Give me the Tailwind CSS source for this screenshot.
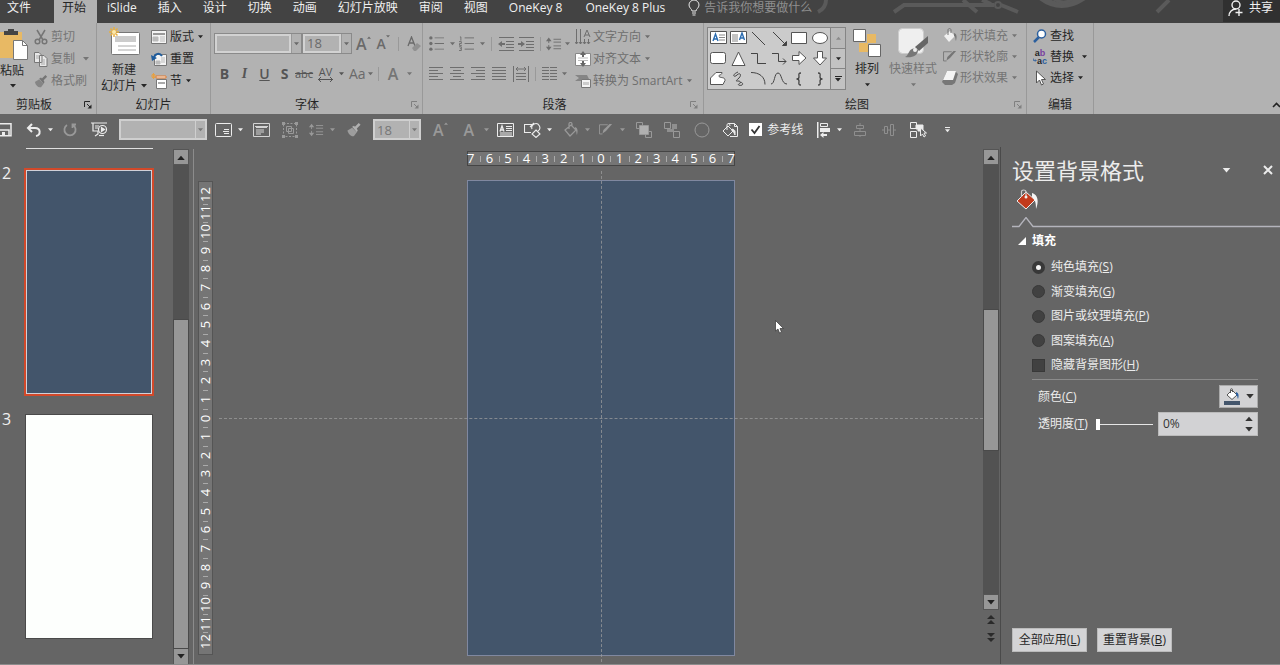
<!DOCTYPE html>
<html lang="zh-CN">
<head>
  <meta charset="UTF-8" />
  <meta name="viewport" content="width=device-width, initial-scale=1.0"/>
  <title>设置背景格式</title>
  <script src="https://cdn.jsdelivr.net/npm/@tailwindcss/browser@4"></script>
</head>
<body class="h-screen flex flex-col overflow-hidden bg-[#656565] text-[12px] leading-4 text-[#262626] whitespace-nowrap font-['Open_Sans','Noto_Sans_CJK_SC',sans-serif]">

  <!-- shared glyphs -->
  <svg class="hidden">
    <symbol id="caret" viewBox="0 0 6 4"><path d="M0 0h6L3 3.5z" fill="currentColor"/></symbol>
    <symbol id="caret-up" viewBox="0 0 6 4"><path d="M0 4h6L3 .5z" fill="currentColor"/></symbol>
    <symbol id="launcher" viewBox="0 0 8 8"><path d="M.5 6V.5H6M3 3l3.500 3.500" fill="none" stroke="currentColor"/><path d="M7.500 3.500v4h-4z" fill="currentColor"/></symbol>
    <symbol id="brush" viewBox="0 0 16 16"><path d="M1 9l5-3 5 5-3 4c-3 1-6-2-7-6z" fill="currentColor" opacity=".75"/><path d="M6 5l2-1 1 1 4-4 2 2-4 4 1 2-1 2z" fill="currentColor"/></symbol>
    <symbol id="bucket" viewBox="0 0 16 16"><path d="M2 8l6-5 5 5-6 6z" fill="currentColor"/><path d="M6 7V2c0-2 3-2 3 0v3" fill="none" stroke="#777"/><path d="M12 5c3 1 3 4 2 8-1-2 0-4-2-5z" fill="#777"/></symbol>
    <symbol id="bucket-line" viewBox="0 0 16 16"><path d="M2 8l6-5 5 5-6 6zM6 7V2c0-2 3-2 3 0v3" fill="none" stroke="currentColor" stroke-width="1.200"/><path d="M12 5c3 1 3 4 2 8-1-2 0-4-2-5z" fill="currentColor"/></symbol>
    <symbol id="outline-pen" viewBox="0 0 16 16"><path d="M10 2H.6v10.500H4" fill="none" stroke="currentColor"/><path d="M15 1L8 9l-4 3 1-4 7-7z" fill="currentColor"/></symbol>
    <symbol id="line-space" viewBox="0 0 18 16"><path d="M4 3v4M4 9v4M9 3h8M9 6h8M9 10h8M9 13h8" stroke="currentColor" fill="none"/><path d="M1 5l3-4 3 4zM1 11l3 4 3-4z" fill="currentColor"/></symbol>
  </svg>

  <!-- tabs -->
  <nav class="relative h-[23px] shrink-0 flex bg-[#434343] text-[#f0f0f0]">
    <svg class="absolute left-[760px] top-0 w-[440px] h-[23px]" viewBox="0 0 440 23" fill="none" stroke="#5a5a5a" stroke-width="4">
      <path d="M66 0q0 8-8 12M134 12l10-7h90M203 0l14 12M241 5l17 7M222 0l9 4M397 12l12-12"/>
      <circle cx="238" cy="5" r="3" stroke-width="2"/>
      <path d="M279-4q22 18 47 0" stroke-width="6"/>
      <path d="M292-2q12 8 22 0" stroke-width="3"/>
    </svg>
    <div class="relative flex items-start">
      <a href="#" class="h-[23px] pl-[7px] w-[54px]">文件</a>
      <a href="#" class="h-[23px] w-[43px] pl-[8px] bg-[#b2b2b2] text-[#262626]">开始</a>
      <div class="flex gap-[21px] pl-[10px]">
        <a href="#">iSlide</a>
        <a href="#">插入</a>
        <a href="#">设计</a>
        <a href="#">切换</a>
        <a href="#">动画</a>
        <a href="#">幻灯片放映</a>
        <a href="#">审阅</a>
        <a href="#">视图</a>
        <a href="#" class="pr-[2px]">OneKey 8</a>
        <a href="#" class="pr-[2px]">OneKey 8 Plus</a>
        <label class="flex gap-1 text-[#8f8f8f]">
          <svg class="w-[12px] h-[16px]" viewBox="0 0 12 16" fill="none" stroke="#e6e6e6"><path d="M4 11c0-2-3-3-3-6a5 5 0 0 1 10 0c0 3-3 4-3 6zM4 13h4M4.500 15h3"/></svg>
          <input aria-label="告诉我" placeholder="告诉我你想要做什么" class="w-[130px] h-4 bg-transparent placeholder:text-[#8f8f8f] outline-none"/>
        </label>
      </div>
    </div>
    <button class="relative ml-auto w-[57px] h-[22px] pl-1 flex gap-1 bg-[#303030] items-start">
      <svg class="w-[18px] h-[17px]" viewBox="0 0 18 17" fill="none" stroke="#f0f0f0" stroke-width="1.400"><circle cx="9" cy="5" r="4"/><path d="M2 16c0-4 3-7 7-7M12 9v7M8.500 12.500h7"/></svg>
      共享
    </button>
  </nav>

  <!-- ribbon -->
  <header class="h-[91px] shrink-0 flex bg-[#b2b2b2]">
    <section class="w-[97px] flex flex-col border-r border-[#999]">
      <div class="flex h-[69px] pt-[3px]">
        <button class="w-[32px] flex flex-col items-start">
          <svg class="w-[28px] h-[34px]" viewBox="0 0 28 34"><path d="M0 6h22v26H0z" fill="#e8b964"/><path d="M4 9V5h4V3h6v2h4v4z" fill="#444"/><path d="M13.500 14.500h9l5 5v14h-14z" fill="#fff" stroke="#777"/><path d="M22.500 14.500v5h5" fill="none" stroke="#777"/></svg>
          <span class="pt-[3px]">粘贴</span>
          <svg class="w-[6px] h-[4px] ml-[10px] mt-[5px]"><use href="#caret"/></svg>
        </button>
        <div class="pl-[2px] text-[#757575]">
          <button class="h-[22px] flex items-center gap-[3px]">
            <svg class="w-[14px] h-[16px]" viewBox="0 0 14 16" fill="none" stroke="currentColor" stroke-width="1.500"><path d="M3 1l6 10M11 1L5 11"/><circle cx="3.500" cy="12.500" r="2.300"/><circle cx="10.500" cy="12.500" r="2.300"/></svg>剪切</button>
          <button class="h-[22px] flex items-center gap-[3px]">
            <svg class="w-[14px] h-[16px]" viewBox="0 0 14 16" fill="#e8e8e8" stroke="#777"><path d="M.5 1.500H5l3 3v7H.5zM5.500 4.500H10l3 3v8H5.500z"/><path d="M2 5h3M2 7h3M7 9h4M7 11h4M7 13h4" stroke="#aaa"/></svg>复制
            <svg class="w-[6px] h-[4px] ml-[5px]"><use href="#caret"/></svg></button>
          <button class="h-[22px] flex items-center gap-[3px]">
            <svg class="w-[14px] h-[14px]"><use href="#brush"/></svg>格式刷</button>
        </div>
      </div>
      <div class="h-[22px] flex items-center pt-[3px] pl-4 pr-1">剪贴板<button aria-label="剪贴板选项" class="ml-auto"><svg class="w-[8px] h-[8px]"><use href="#launcher"/></svg></button></div>
    </section>

    <section class="w-[114px] flex flex-col border-r border-[#999]">
      <div class="flex h-[69px] pt-[3px]">
        <button class="w-[54px] flex flex-col items-center">
          <svg class="w-[32px] h-[30px] shrink-0" viewBox="0 0 32 30"><rect x="3.500" y="6.500" width="28" height="22" rx="1" fill="#fff" stroke="#777"/><path d="M7 10h21v6H7z" fill="#ccc"/><path d="M10 20h18M10 24h18" stroke="#aaa"/><path d="M6 1v10M1 6h10M2.500 2.500l7 7M9.500 2.500l-7 7" stroke="#e8b040" stroke-width="1.500"/><circle cx="6" cy="6" r="2" fill="#f8e8b0"/></svg>
          <span class="pt-[6px]">新建</span>
          <span class="flex items-center gap-1">幻灯片<svg class="w-[6px] h-[4px]"><use href="#caret"/></svg></span>
        </button>
        <div>
          <button class="h-[22px] flex items-center gap-[3px]">
            <svg class="w-[16px] h-[14px]" viewBox="0 0 16 14"><path d="M.5.5h15v13H.5z" fill="#f4f4f4" stroke="#777"/><path d="M2 3h12v2H2z" fill="#999"/><path d="M9 7h5M9 9h5M9 11h5M2 7h5v4H2z" fill="#bbb" stroke="#bbb"/></svg>版式
            <svg class="w-[5px] h-[4px] ml-[1px]"><use href="#caret"/></svg></button>
          <button class="h-[22px] flex items-center gap-[3px]">
            <svg class="w-[16px] h-[14px]" viewBox="0 0 16 14"><path d="M3.500 2.500h12v11h-12z" fill="#f4f4f4" stroke="#777"/><path d="M10 6h4M10 8h4M10 10h4M5 9h4v3H5z" fill="#bbb" stroke="#bbb"/><path d="M3 7c0-5 5-7 8-3" fill="none" stroke="#1f5c9c" stroke-width="2"/><path d="M0 3l1 6 5-3z" fill="#1f5c9c"/></svg>重置</button>
          <button class="h-[22px] flex items-center gap-[3px]">
            <svg class="w-[16px] h-[16px]" viewBox="0 0 16 16"><path d="M5 3h10v2H5z" fill="#f4f4f4" stroke="#e07a30"/><path d="M5.500 6.500h10v9h-10z" fill="#fff" stroke="#777"/><path d="M7 9h7v2H7z" fill="#aaa"/><path d="M2.500 0v6M0 3h5M1 1l3 4M4 1L1 5" stroke="#e8a040"/></svg>节
            <svg class="w-[5px] h-[4px] ml-[1px]"><use href="#caret"/></svg></button>
        </div>
      </div>
      <div class="h-[22px] pt-[3px] flex items-center justify-center">幻灯片</div>
    </section>

    <section class="w-[212px] flex flex-col border-r border-[#999] text-[#6a6a6a]">
      <div class="h-[69px] pl-[3px]">
        <div class="h-[41px] flex items-center">
          <label class="flex items-center w-[88px] h-[21px] border border-[#8a8a8a]">
            <select aria-label="字体" class="appearance-none flex-1 w-0 h-full border-2 border-[#d2d2d2] bg-[#b2b2b2]"><option></option></select>
            <span class="w-[10px] h-full flex items-center justify-center border-l border-[#999]"><svg class="w-[5px] h-[4px]"><use href="#caret"/></svg></span>
          </label>
          <label class="flex items-center w-[50px] h-[21px] border border-[#8a8a8a]">
            <select aria-label="字号" class="appearance-none flex-1 w-0 h-full pl-[2px] border-2 border-[#d2d2d2] bg-[#b2b2b2] leading-[15px] text-[13px]"><option>18</option></select>
            <span class="w-[10px] h-full flex items-center justify-center border-l border-[#999]"><svg class="w-[5px] h-[4px]"><use href="#caret"/></svg></span>
          </label>
          <button aria-label="增大字号" class="ml-1 flex items-start text-[16px] font-semibold leading-5">A<svg class="w-[4px] h-[3px] mt-[2px]"><use href="#caret-up"/></svg></button>
          <button aria-label="减小字号" class="ml-[6px] flex items-start text-[14px] font-semibold leading-5">A<svg class="w-[4px] h-[3px] mt-[1px]"><use href="#caret"/></svg></button>
          <span class="ml-2 w-px h-[14px] bg-[#999]"></span>
          <button aria-label="清除格式" class="ml-2"><svg class="w-[14px] h-[16px]" viewBox="0 0 14 16"><path d="M1 10L4.500 1 8 10M2 7h5" fill="none" stroke="currentColor" stroke-width="1.300"/><path d="M5 12l5-5 4 3-5 5H7z" fill="#919191"/></svg></button>
        </div>
        <div class="h-[20px] flex items-center gap-[9px] pl-[5px] text-[14px] text-[#555]">
          <button class="font-bold w-[11px]">B</button>
          <button class="font-bold italic w-[11px] font-['Liberation_Serif',serif]">I</button>
          <button class="font-semibold underline w-[11px]">U</button>
          <button class="font-bold w-[11px]">S</button>
          <button class="line-through text-[11px] w-[18px] -mx-1">abc</button>
          <button class="flex items-center gap-[6px] text-[11px]"><span class="flex flex-col items-center leading-[11px]">AV<svg class="w-[15px] h-[5px]" viewBox="0 0 15 5" fill="none" stroke="currentColor"><path d="M0 2.500h15M3 0L.5 2.500 3 5M12 0l2.500 2.500L12 5"/></svg></span><svg class="w-[5px] h-[4px]"><use href="#caret"/></svg></button>
          <button class="flex items-center gap-[2px] text-[#6a6a6a] -ml-1">Aa<svg class="w-[5px] h-[4px]"><use href="#caret"/></svg></button>
          <span class="w-px h-[14px] bg-[#999] -ml-1"></span>
          <button class="flex items-center gap-[9px] font-semibold text-[16px] text-[#757575]">A<svg class="w-[5px] h-[4px]"><use href="#caret"/></svg></button>
        </div>
      </div>
      <div class="h-[22px] flex items-center pt-[3px] pr-[3px] text-[#262626]"><span class="flex-1 text-center pr-2">字体</span><button aria-label="字体选项" class="text-[#808080]"><svg class="w-[8px] h-[8px]"><use href="#launcher"/></svg></button></div>
    </section>

    <section class="w-[281px] flex flex-col border-r border-[#999] text-[#6e6e6e]">
      <div class="h-[69px] flex">
        <div class="w-[152px] pl-[6px]">
          <div class="h-[41px] flex items-center">
            <button aria-label="项目符号" class="flex items-center gap-[6px]"><svg class="w-[15px] h-[15px]" viewBox="0 0 16 16" fill="currentColor"><circle cx="2" cy="2" r="1.800"/><circle cx="2" cy="8" r="1.800"/><circle cx="2" cy="14" r="1.800"/><path d="M6 1.500h10v1H6zM6 7.500h10v1H6zM6 13.500h10v1H6z"/></svg><svg class="w-[5px] h-[4px]"><use href="#caret"/></svg></button>
            <button aria-label="编号" class="ml-1 flex items-center gap-[6px]"><svg class="w-[15px] h-[15px]" viewBox="0 0 16 16" fill="none" stroke="currentColor"><path d="M1 1h1v4M0 6h2.500v2H.5v2h2.500M0 11.500h2.500v4H0M1 13.500h1M6 2h10M6 8h10M6 14h10"/></svg><svg class="w-[5px] h-[4px]"><use href="#caret"/></svg></button>
            <span class="ml-[6px] w-px h-[14px] bg-[#999]"></span>
            <button aria-label="减少缩进" class="ml-[6px]"><svg class="w-[16px] h-[14px]" viewBox="0 0 16 14" fill="none" stroke="currentColor"><path d="M1 .5h15M8 4.500h8M8 7.500h8M8 10.500h8M1 13.500h15"/><path d="M0 7l4-3v2h3v2H4v2z" fill="currentColor" stroke="none"/></svg></button>
            <button aria-label="增加缩进" class="ml-[4px]"><svg class="w-[16px] h-[14px]" viewBox="0 0 16 14" fill="none" stroke="currentColor"><path d="M1 .5h15M8 4.500h8M8 7.500h8M8 10.500h8M1 13.500h15"/><path d="M7 7L3 4v2H0v2h3v2z" fill="currentColor" stroke="none"/></svg></button>
            <span class="ml-[6px] w-px h-[14px] bg-[#999]"></span>
            <button aria-label="行距" class="ml-[4px] flex items-center gap-[3px]"><svg class="w-[17px] h-[16px]"><use href="#line-space"/></svg><svg class="w-[5px] h-[4px]"><use href="#caret"/></svg></button>
          </div>
          <div class="h-[20px] flex items-center gap-[7px]">
            <button aria-label="左对齐"><svg class="w-[14px] h-[15px]" viewBox="0 0 14 15" stroke="currentColor"><path d="M0 .5h14M0 3.500h9M0 6.500h14M0 9.500h9M0 12.500h14"/></svg></button>
            <button aria-label="居中"><svg class="w-[14px] h-[15px]" viewBox="0 0 14 15" stroke="currentColor"><path d="M0 .5h14M3 3.500h8M0 6.500h14M3 9.500h8M0 12.500h14"/></svg></button>
            <button aria-label="右对齐"><svg class="w-[14px] h-[15px]" viewBox="0 0 14 15" stroke="currentColor"><path d="M0 .5h14M5 3.500h9M0 6.500h14M5 9.500h9M0 12.500h14"/></svg></button>
            <button aria-label="两端对齐"><svg class="w-[14px] h-[15px]" viewBox="0 0 14 15" stroke="currentColor"><path d="M0 .5h14M0 3.500h14M0 6.500h14M0 9.500h14M0 12.500h14"/></svg></button>
            <button aria-label="分散对齐"><svg class="w-[16px] h-[16px]" viewBox="0 0 16 16" fill="none" stroke="currentColor"><path d="M.5 0v16M15.500 0v16M3 3h10M5 1L3 3l2 2M11 1l2 2-2 2M3 7.500h10M3 10.500h10M3 13.500h10"/></svg></button>
            <span class="w-px h-[14px] bg-[#999] -mx-px"></span>
            <button aria-label="分栏" class="flex items-center gap-[5px]"><svg class="w-[15px] h-[15px]" viewBox="0 0 15 15" stroke="currentColor"><path d="M0 .5h7M8 .5h7M0 3.500h7M8 3.500h7M0 6.500h7M8 6.500h7M0 9.500h7M8 9.500h7M0 12.500h7M8 12.500h7"/></svg><svg class="w-[5px] h-[4px]"><use href="#caret"/></svg></button>
          </div>
        </div>
        <div class="pt-[3px]">
          <button class="h-[22px] flex items-center gap-[2px]">
            <svg class="w-[16px] h-[16px]" viewBox="0 0 16 16" fill="none" stroke="currentColor"><path d="M1.500 0v15M5.500 0v15M9 8L12 1l3 7M10 6h4M9.500 10v5M13.500 10v5M0 13l1.500 2L3 13M4 13l1.500 2L7 13M8 13l1.500 2 1.500-2M12 13l1.500 2 1.500-2"/></svg>文字方向
            <svg class="w-[5px] h-[4px] ml-[2px]"><use href="#caret"/></svg></button>
          <button class="h-[22px] flex items-center gap-[2px]">
            <svg class="w-[16px] h-[16px]" viewBox="0 0 16 16"><path d="M.5 2.500h15v12H.5z" fill="#fff" stroke="#888"/><path d="M3 7h10M3 9.500h10" stroke="#bbb"/><path d="M5 4L8 0l3 4H9v2H7V4zM5 12L8 16l3-4H9v-2H7v2z" fill="#666"/></svg>对齐文本
            <svg class="w-[5px] h-[4px] ml-[2px]"><use href="#caret"/></svg></button>
          <button class="h-[22px] flex items-center gap-[2px]">
            <svg class="w-[16px] h-[14px]" viewBox="0 0 16 14"><path d="M0 1h12l2 4-4 2H0l4-3z" fill="#858585"/><path d="M6.500 5.500h9v8h-9z" fill="#f4f4f4" stroke="#777"/><path d="M8 8h6v3H8z" fill="#ccc"/></svg>转换为 SmartArt
            <svg class="w-[5px] h-[4px] ml-[3px]"><use href="#caret"/></svg></button>
        </div>
      </div>
      <div class="h-[22px] flex items-center pt-[3px] pr-[5px] text-[#262626]"><span class="flex-1 text-center pr-1">段落</span><button aria-label="段落选项" class="text-[#808080]"><svg class="w-[8px] h-[8px]"><use href="#launcher"/></svg></button></div>
    </section>

    <section class="w-[323px] flex flex-col border-r border-[#999]">
      <div class="h-[69px] flex pl-[3px] pt-[2px]">
        <div class="mt-[2px] w-[139px] h-[63px] flex border border-[#858585] bg-[#cbcbcb]">
          <div class="flex-1 grid grid-cols-6 grid-rows-3 place-items-center">
            <svg class="w-[17px] h-[14px]" viewBox="0 0 17 14"><path d="M.5.5h16v12H.5z" fill="#fff" stroke="#555"/><path d="M3 10l2.500-7L8 10M4 8h3" fill="none" stroke="#2b6cb0" stroke-width="1.400"/><path d="M9 4h6M9 6.500h6M9 9h6" stroke="#888"/></svg>
            <svg class="w-[17px] h-[14px]" viewBox="0 0 17 14"><path d="M.5.5h16v12H.5z" fill="#fff" stroke="#555"/><path d="M9.500 9L12 2l2.500 7M10.500 7h3" fill="none" stroke="#2b6cb0" stroke-width="1.400"/><path d="M3 3v8M5 3v8M7 3v8" stroke="#888"/></svg>
            <svg class="w-[15px] h-[15px]" viewBox="0 0 15 15" fill="none" stroke="#444"><path d="M1 1l13 13"/></svg>
            <svg class="w-[15px] h-[15px]" viewBox="0 0 15 15" fill="none" stroke="#444"><path d="M1 1l13 13"/><path d="M14.500 10.500v4h-4z" fill="#444"/></svg>
            <svg class="w-[16px] h-[12px]" viewBox="0 0 16 12"><path d="M.5.5h15v11H.5z" fill="#fff" stroke="#555"/></svg>
            <svg class="w-[16px] h-[12px]" viewBox="0 0 16 12"><ellipse cx="8" cy="6" rx="7.500" ry="5.500" fill="#fff" stroke="#555"/></svg>
            <svg class="w-[16px] h-[12px]" viewBox="0 0 16 12"><rect x=".5" y=".5" width="15" height="11" rx="2" fill="#fff" stroke="#555"/></svg>
            <svg class="w-[15px] h-[15px]" viewBox="0 0 15 15"><path d="M7.500 1L14 14.500H1z" fill="#fff" stroke="#555"/></svg>
            <svg class="w-[15px] h-[13px]" viewBox="0 0 15 13" fill="none" stroke="#444"><path d="M0 1.500h6.500v10H15"/></svg>
            <svg class="w-[15px] h-[13px]" viewBox="0 0 15 13" fill="none" stroke="#444"><path d="M0 1.500h6.500v8H14M11 6.500l3 3-3 3"/></svg>
            <svg class="w-[15px] h-[14px]" viewBox="0 0 15 14"><path d="M.5 4.500H7v-4L14 7l-7 6.500v-4H.5z" fill="#fff" stroke="#555"/></svg>
            <svg class="w-[14px] h-[15px]" viewBox="0 0 14 15"><path d="M4.500.5V7h-4L7 14l6.500-7h-4V.5z" fill="#fff" stroke="#555"/></svg>
            <svg class="w-[16px] h-[13px]" viewBox="0 0 16 13"><path d="M.5 12.500V6L6 .5h6c0 3-4 2-3 4 2 2 6 0 6 4l-2 4z" fill="#fff" stroke="#555"/></svg>
            <svg class="w-[13px] h-[15px]" viewBox="0 0 13 15" fill="none" stroke="#444"><path d="M6 1C-1 4 2 7 5 4s5 0 2 3-4 3-1 3 3 2 1 3 1 2 3 1-1-4-2-2"/></svg>
            <svg class="w-[15px] h-[13px]" viewBox="0 0 15 13" fill="none" stroke="#444"><path d="M0 .5c8 0 14 4 14 12"/></svg>
            <svg class="w-[16px] h-[13px]" viewBox="0 0 16 13" fill="none" stroke="#444"><path d="M0 12C4 12 3 1 7 1s3 11 9 11"/></svg>
            <svg class="w-[8px] h-[14px]" viewBox="0 0 8 14" fill="none" stroke="#444" stroke-width="1.300"><path d="M6 1C3 1 4 3 4 5S3 7 1.500 7C3 7 4 7 4 9s-1 4 2 4"/></svg>
            <svg class="w-[8px] h-[14px]" viewBox="0 0 8 14" fill="none" stroke="#444" stroke-width="1.300"><path d="M2 1c3 0 2 2 2 4s1 2 2.500 2C5 7 4 7 4 9s1 4-2 4"/></svg>
          </div>
          <div class="w-[15px] flex flex-col border-l border-[#858585] bg-[#c2c2c2]">
            <button aria-label="上一行" class="flex-1 flex items-center justify-center bg-[#b8b8b8] text-[#8a8a8a]"><svg class="w-[5px] h-[4px]"><use href="#caret-up"/></svg></button>
            <button aria-label="下一行" class="flex-1 flex items-center justify-center border-y border-[#858585]"><svg class="w-[5px] h-[4px]"><use href="#caret"/></svg></button>
            <button aria-label="其他" class="flex-1 flex flex-col gap-[1px] items-center justify-center"><span class="w-[7px] h-px bg-[#262626]"></span><svg class="w-[6px] h-[4px]"><use href="#caret"/></svg></button>
          </div>
        </div>
        <button class="ml-[6px] w-[30px] flex flex-col items-center">
          <svg class="w-[28px] h-[30px] mt-[3px] shrink-0" viewBox="0 0 28 30"><path d="M14 6h9v9h-9zM6 15h9v9H6z" fill="#e8b964"/><path d="M.5 1.500h12v12H.5zM15.500 16.500h12v12h-12z" fill="#fff" stroke="#666"/></svg>
          <span class="pt-[3px]">排列</span>
          <svg class="w-[5px] h-[4px] mt-[6px]"><use href="#caret"/></svg>
        </button>
        <button class="ml-[7px] w-[48px] flex flex-col items-center text-[#757575]">
          <svg class="w-[30px] h-[30px] mt-[3px] shrink-0" viewBox="0 0 30 30"><rect x=".5" y=".5" width="25" height="25" rx="4" fill="#efefef" stroke="#ccc"/><path d="M30 8v7l-9 8-4-4z" fill="#666"/><path d="M20 22c0 6-6 8-13 7 4-2 3-6 7-8 3-1 5 0 6 1z" fill="#777"/><circle cx="17" cy="22" r="2" fill="#eee"/></svg>
          <span class="pt-[3px]">快速样式</span>
          <svg class="w-[5px] h-[4px] mt-[6px]"><use href="#caret"/></svg>
        </button>
        <div class="ml-[5px] text-[#757575]">
          <button class="h-[21px] flex items-center gap-[2px]"><svg class="w-[16px] h-[16px] text-[#f0f0f0]"><use href="#bucket"/></svg>形状填充<svg class="w-[5px] h-[4px] ml-[2px]"><use href="#caret"/></svg></button>
          <button class="h-[21px] flex items-center gap-[2px]"><svg class="w-[16px] h-[14px]"><use href="#outline-pen"/></svg>形状轮廓<svg class="w-[5px] h-[4px] ml-[2px]"><use href="#caret"/></svg></button>
          <button class="h-[21px] flex items-center gap-[2px]"><svg class="w-[16px] h-[15px]" viewBox="0 0 16 15"><path d="M5 1h8l3 3-3 9-3 2H3l-3-3z" fill="#777"/><path d="M5 1h9l-3 9H1z" fill="#f4f4f4"/></svg>形状效果<svg class="w-[5px] h-[4px] ml-[2px]"><use href="#caret"/></svg></button>
        </div>
      </div>
      <div class="h-[22px] flex items-center pt-[3px] pr-[4px]"><span class="flex-1 text-center pr-1">绘图</span><button aria-label="绘图选项" class="text-[#808080]"><svg class="w-[8px] h-[8px]"><use href="#launcher"/></svg></button></div>
    </section>

    <section class="w-[67px] flex flex-col border-r border-[#999]">
      <div class="h-[69px] pl-[6px] pt-[2px]">
        <button class="h-[21px] flex items-center gap-[3px]"><svg class="w-[14px] h-[14px]" viewBox="0 0 14 14"><path d="M1 13l5-5" stroke="#2b5f9e" stroke-width="2.500"/><circle cx="8.500" cy="5" r="4" fill="#fff" stroke="#2b5f9e" stroke-width="1.500"/></svg>查找</button>
        <button class="h-[21px] flex items-center gap-[3px]">
          <span class="w-[14px] flex flex-col text-[9px] leading-[8px] font-bold font-['Liberation_Sans',sans-serif]"><span>a<span class="text-[#7a3fa0]">b</span></span><span class="flex items-center justify-end"><svg class="w-[5px] h-[5px]" viewBox="0 0 5 5" fill="none" stroke="#2b5f9e"><path d="M.5 0v2.500H4M2.500 1L4 2.500 2.500 4"/></svg>a<span class="text-[#2b5f9e]">c</span></span></span>替换
          <svg class="w-[5px] h-[4px] ml-[5px]"><use href="#caret"/></svg></button>
        <button class="h-[21px] flex items-center gap-[3px]"><svg class="w-[14px] h-[16px]" viewBox="0 0 14 16"><path d="M3.500 1v12l3-3 2 5 2-1-2-4.500h4z" fill="#fff" stroke="#555"/></svg>选择
          <svg class="w-[5px] h-[4px] ml-[1px]"><use href="#caret"/></svg></button>
      </div>
      <div class="h-[22px] pt-[3px] flex items-center justify-center">编辑</div>
    </section>
    <button aria-label="折叠功能区" class="ml-auto self-end mb-[6px] w-[8px]"><svg class="w-[8px] h-[6px]" viewBox="0 0 8 6" fill="none" stroke="#222" stroke-width="1.600"><path d="M1 5l3.500-3.500L8 5"/></svg></button>
  </header>

  <!-- quick access -->
  <div class="h-[33px] pb-[2px] shrink-0 flex items-center text-[#ececec]">
    <button aria-label="保存"><svg class="w-[12px] h-[14px]" viewBox="0 0 12 14"><path d="M0 .7h11v12H0M0 7h9v5" fill="none" stroke="currentColor" stroke-width="1.500"/><path d="M2 9h3v4H2z" fill="currentColor"/></svg></button>
    <button aria-label="撤消" class="ml-[14px] flex items-center gap-[6px]"><svg class="w-[16px] h-[14px]" viewBox="0 0 16 14" fill="none" stroke="currentColor" stroke-width="2"><path d="M6 1L2 5l4 4M2 5h7c6 0 6 7 1 8"/></svg><svg class="w-[5px] h-[4px]"><use href="#caret"/></svg></button>
    <button aria-label="恢复" class="ml-[10px] text-[#999]"><svg class="w-[14px] h-[14px]" viewBox="0 0 14 14" fill="none" stroke="currentColor" stroke-width="1.800"><path d="M4 2a5.600 5.600 0 1 0 6 0M13 1.500H9.500V5"/></svg></button>
    <button aria-label="从头放映" class="ml-[14px]"><svg class="w-[17px] h-[15px]" viewBox="0 0 17 15" fill="none" stroke="currentColor" stroke-width="1.200"><path d="M0 1h16M2 1v8h5M4 4h4M4 6h3M7 9v3l-3 2"/><circle cx="11.500" cy="7.500" r="4"/><path d="M10.500 5.500v4l3-2z" fill="currentColor"/><path d="M8 13.500h5"/></svg></button>
    <label class="ml-[11px] flex w-[88px] h-[21px] border-2 border-[#cfcfcf] bg-[#b2b2b2] text-[#777]">
      <select aria-label="字体" class="appearance-none flex-1 w-0"><option></option></select>
      <span class="w-[10px] h-full flex items-center justify-center border-l border-[#cfcfcf]"><svg class="w-[5px] h-[4px]"><use href="#caret"/></svg></span>
    </label>
    <button aria-label="文本框" class="ml-[8px] flex items-center gap-[6px]"><svg class="w-[17px] h-[14px]" viewBox="0 0 17 14" fill="none" stroke="currentColor"><rect x=".5" y=".5" width="16" height="13" rx="1"/><path d="M9 6.500h5M8 8.500h6M9 10.500h5"/></svg><svg class="w-[5px] h-[4px]"><use href="#caret"/></svg></button>
    <button aria-label="版式" class="ml-[10px]"><svg class="w-[17px] h-[14px]" viewBox="0 0 17 14" fill="none" stroke="#d4d4d4"><path d="M.5.5h16v13H.5zM2 3.500h13M3 7h8M3 9h8M3 11h5"/><path d="M3 4h11" stroke-width="2"/></svg></button>
    <button aria-label="组合" class="ml-[12px] text-[#999]"><svg class="w-[16px] h-[16px]" viewBox="0 0 16 16" fill="none" stroke="currentColor"><path d="M1.500 1.500h13v13h-13z" stroke-dasharray="2 1.500"/><path d="M4.500 4.500h5v5h-5zM6.500 6.500h5v5h-5z"/><path d="M0 0h3v3H0zM13 0h3v3h-3zM0 13h3v3H0zM13 13h3v3h-3z" fill="currentColor" stroke="none"/></svg></button>
    <button aria-label="行距" class="ml-[10px] flex items-center gap-[6px] text-[#999]"><svg class="w-[16px] h-[16px]"><use href="#line-space"/></svg><svg class="w-[5px] h-[4px]"><use href="#caret"/></svg></button>
    <button aria-label="格式刷" class="ml-[11px] text-[#b0b0b0]"><svg class="w-[16px] h-[15px]"><use href="#brush"/></svg></button>
    <label class="ml-[11px] flex w-[48px] h-[21px] border-2 border-[#cfcfcf] bg-[#b2b2b2] text-[#777]">
      <select aria-label="字号" class="appearance-none flex-1 w-0 pl-[2px] leading-4 text-[13px]"><option>18</option></select>
      <span class="w-[10px] h-full flex items-center justify-center border-l border-[#cfcfcf]"><svg class="w-[5px] h-[4px]"><use href="#caret"/></svg></span>
    </label>
    <button aria-label="增大字号" class="ml-[12px] flex items-start text-[16px] font-semibold text-[#999]">A<svg class="w-[4px] h-[3px]"><use href="#caret-up"/></svg></button>
    <button aria-label="字体颜色" class="ml-[16px] flex items-center gap-[10px] text-[16px] font-semibold text-[#999]">A<svg class="w-[5px] h-[4px]"><use href="#caret"/></svg></button>
    <button aria-label="横排文本框" class="ml-[8px]"><svg class="w-[17px] h-[14px]" viewBox="0 0 17 14" fill="none" stroke="currentColor"><path d="M.5.5h16v13H.5zM9 3.500h6M9 5.500h6M9 7.500h6M3 10h12M3 12h12"/><path d="M3 8.500L5 3l2 5.500M4 7h2" stroke-width="1.300"/></svg></button>
    <button aria-label="形状" class="ml-[10px] flex items-center gap-[6px]"><svg class="w-[17px] h-[16px]" viewBox="0 0 17 16" fill="none" stroke="currentColor" stroke-width="1.100"><path d="M7 10.500H.5v-8h8M12 8l4 4-4 3.500L8 12z"/><path d="M8 7a4 4 0 1 1 6 2M6 5l4-4"/></svg><svg class="w-[5px] h-[4px]"><use href="#caret"/></svg></button>
    <button aria-label="形状填充" class="ml-[11px] flex items-center gap-[6px] text-[#999]"><svg class="w-[16px] h-[16px]"><use href="#bucket-line"/></svg><svg class="w-[5px] h-[4px]"><use href="#caret"/></svg></button>
    <button aria-label="形状轮廓" class="ml-[8px] flex items-center gap-[6px] text-[#999]"><svg class="w-[16px] h-[14px]"><use href="#outline-pen"/></svg><svg class="w-[5px] h-[4px]"><use href="#caret"/></svg></button>
    <button aria-label="上移一层" class="ml-[11px] text-[#999]"><svg class="w-[16px] h-[16px]" viewBox="0 0 16 16" fill="none" stroke="currentColor"><path d="M3 6.500H.5v-6h6V3M13 9.500h2.500v6h-6V13"/><path d="M3.500 3.500h9v9h-9z" fill="#b0b0b0"/></svg></button>
    <button aria-label="下移一层" class="ml-[12px] text-[#999]"><svg class="w-[16px] h-[16px]" viewBox="0 0 16 16" fill="none" stroke="currentColor"><path d="M8 2h5v5h-3v3H3V7h5z" fill="#8f8f8f" stroke="none"/><path d="M.5.5h6v6h-6zM9.500 9.500h6v6h-6z" fill="#656565"/></svg></button>
    <button aria-label="椭圆" class="ml-[14px] text-[#999]"><svg class="w-[16px] h-[16px]" viewBox="0 0 16 16" fill="none" stroke="currentColor"><circle cx="8" cy="8" r="7"/></svg></button>
    <button aria-label="背景格式" class="ml-[12px]"><svg class="w-[17px] h-[16px]" viewBox="0 0 17 16" fill="none" stroke="currentColor"><path d="M6 1.500h6.500l3 3v10H8M12.500 1.500v3h3"/><path d="M1 9l5-5 5 5-5 5zM5 8V3c0-2 3-2 3 1"/><path d="M10 7c4 1 3 3 3 6-1-2-1-3-3-4z" fill="currentColor"/></svg></button>
    <label class="ml-[10px] flex items-center gap-[5px]">
      <input type="checkbox" checked class="peer sr-only"/>
      <svg class="w-[13px] h-[13px] bg-white" viewBox="0 0 13 13" fill="none" stroke="#333" stroke-width="1.800"><path d="M2.500 6.500l3 3.500L10.500 3"/></svg>
      参考线
    </label>
    <button aria-label="对齐" class="ml-[14px] flex items-center gap-[6px]"><svg class="w-[14px] h-[16px]" viewBox="0 0 14 16" fill="currentColor"><path d="M0 0h1.500v16H0zM3 6h10v4H3z"/><path d="M3.500 1.500h7v3h-7z" fill="none" stroke="currentColor"/><path d="M3 13l3.500-3v2H10v2H6.500v2z"/></svg><svg class="w-[5px] h-[4px]"><use href="#caret"/></svg></button>
    <button aria-label="水平居中" class="ml-[12px] text-[#8f8f8f]"><svg class="w-[12px] h-[14px]" viewBox="0 0 12 14" fill="none" stroke="currentColor"><path d="M6 0v2M6 6v3M6 13v1M2.500 2.500h7v3h-7zM.5 8.500h11v4H.5z"/></svg></button>
    <button aria-label="垂直居中" class="ml-[16px] text-[#8f8f8f]"><svg class="w-[14px] h-[12px]" viewBox="0 0 14 12" fill="none" stroke="currentColor"><path d="M0 6h2M6 6h2M12 6h2M2.500 2.500h3v7h-3zM8.500.5h3v11h-3z"/></svg></button>
    <button aria-label="选择窗格" class="ml-[14px]"><svg class="w-[17px] h-[16px]" viewBox="0 0 17 16" fill="none" stroke="currentColor"><path d="M.5.5h6v6h-6zM.5 9.500h6v6h-6z"/><path d="M6 3h7v6H8V7H6z" fill="currentColor"/><path d="M10.500 6v8l2-2 1.500 3 1.500-1-1.500-3h2.500z" fill="#656565"/></svg></button>
    <button aria-label="自定义快速访问工具栏" class="ml-[18px] flex flex-col items-center gap-[1px]"><span class="w-[5px] h-px bg-[#ececec]"></span><svg class="w-[5px] h-[4px]"><use href="#caret"/></svg></button>
  </div>

  <main class="flex-1 min-h-0 flex border-b border-[#8c8c8c]">
    <!-- slide thumbnails -->
    <aside class="w-[173px] pl-[2px] text-[16px] leading-5 text-[#f0f0f0]">
      <div class="ml-6 w-[127px] mt-[1px] border-b border-[#e0e0e0]"></div>
      <div class="flex pt-[14px]">
        <span class="w-[22px]">2</span>
        <a href="#" aria-label="幻灯片 2" class="mt-[5px] w-[130px] h-[228px] border-2 border-[#d2492a]"><span class="block h-full border border-[#d0d0d8] bg-[#43556b]"></span></a>
      </div>
      <div class="flex pt-[13px]">
        <span class="w-[23px]">3</span>
        <a href="#" aria-label="幻灯片 3" class="mt-[5px] w-[128px] h-[225px] bg-[#fdfffd] border border-[#4a4a4a]"></a>
      </div>
    </aside>
    <div class="w-[16px] mt-[2px] flex flex-col bg-[#525252]">
      <button aria-label="向上滚动" class="h-[16px] border border-[#555] bg-[#979797] flex items-center justify-center text-[#222]"><svg class="w-[8px] h-[5px]"><use href="#caret-up"/></svg></button>
      <div class="flex-1"></div>
      <div class="h-[64%] bg-[#979797] border border-[#4a4a4a]"></div>
      <button aria-label="向下滚动" class="h-[15px] border-x border-[#555] bg-[#979797] flex items-center justify-center text-[#222]"><svg class="w-[8px] h-[5px]"><use href="#caret"/></svg></button>
    </div>
    <div class="w-[5px] mt-[2px] border-r border-[#8c8c8c]"></div>

    <!-- editor -->
    <div class="flex-1 min-w-0 flex pl-[4px] pr-px">
      <div id="vruler" class="w-[15px] mt-[34px] mb-[9px] py-[3px] flex flex-col bg-[#757575] border border-[#555] text-[13px] text-white"></div>
      <div class="relative flex-1 flex flex-col items-center pt-[4px] pb-[8px] ml-[6px]">
        <div class="w-[268px] h-[15px] flex justify-center border border-[#454545] bg-[#757575]">
          <div id="hruler" class="w-[279px] shrink-0 flex items-center text-[13px] text-white"></div>
        </div>
        <div class="mt-[14px] w-[268px] flex-1 bg-[#43556b] border border-[#8088a0]"></div>
        <div class="absolute left-1/2 top-[24px] bottom-[2px] border-l border-dashed border-[#a0a0a0]/70"></div>
        <div class="absolute inset-x-0 top-[271px] border-t border-dashed border-[#a0a0a0]/70"></div>
        <svg class="absolute left-[556px] top-[173px] w-[9px] h-[14px]" viewBox="0 0 9 14"><path d="M.5.5v10.500l2.500-2 1.500 4 2-.8L5 8.500h3.500z" fill="#fff" stroke="#333" stroke-width=".7"/></svg>
      </div>
      <div class="w-[16px] mt-[2px] flex flex-col bg-[#656565]">
        <div class="flex-1 flex flex-col bg-[#525252]">
          <button aria-label="向上滚动" class="h-[16px] border border-[#555] bg-[#979797] flex items-center justify-center text-[#222]"><svg class="w-[8px] h-[5px]"><use href="#caret-up"/></svg></button>
          <div class="flex-1"></div>
          <div class="h-[142px] bg-[#979797] border border-[#4a4a4a]"></div>
          <div class="flex-1"></div>
          <button aria-label="向下滚动" class="h-[16px] border border-[#555] bg-[#979797] flex items-center justify-center text-[#222]"><svg class="w-[8px] h-[5px]"><use href="#caret"/></svg></button>
        </div>
        <div class="h-[54px] flex flex-col items-center pt-[5px] gap-[9px] text-[#2a2a2a]">
          <button aria-label="上一张幻灯片" class="flex"><svg class="w-[8px] h-[9px]" viewBox="0 0 8 9" fill="currentColor"><path d="M0 4h8L4 0zM0 9h8L4 5z"/></svg></button>
          <button aria-label="下一张幻灯片" class="flex"><svg class="w-[8px] h-[9px]" viewBox="0 0 8 9" fill="currentColor"><path d="M0 0h8L4 4zM0 5h8L4 9z"/></svg></button>
        </div>
      </div>
    </div>

    <!-- format background pane -->
    <aside class="w-[280px] flex flex-col border-l border-[#4a4a4a] pl-[11px] text-[#ececec]">
      <div class="flex items-center h-[28px] mt-[9px]">
        <h1 class="text-[22px] leading-7">设置背景格式</h1>
        <button aria-label="任务窗格选项" class="ml-auto"><svg class="w-[9px] h-[5px]"><use href="#caret"/></svg></button>
        <button aria-label="关闭" class="ml-[32px] mr-[7px]"><svg class="w-[10px] h-[10px]" viewBox="0 0 10 10" stroke="currentColor" stroke-width="2"><path d="M1 1l8 8M9 1L1 9"/></svg></button>
      </div>
      <button aria-label="填充" class="ml-[4px] mt-[5px] w-[22px]"><svg class="w-[22px] h-[22px]" viewBox="0 0 22 22"><path d="M1 12l9-9 9 8-9 9z" fill="#c23a1c" stroke="#eee"/><path d="M5.500 8V2.500c0-2 4-2 4.500 0V8" fill="none" stroke="#ccc" stroke-width="1.200"/><circle cx="10" cy="8" r="1.500" fill="#eee"/><path d="M16 4c6 2 7 8 4 16 0-7-1-9-4-12z" fill="#f4f4f4"/></svg></button>
      <svg class="mt-[6px] h-[11px] w-full" fill="none" stroke="#b4b4bc"><path d="M0 9.500h7l7-9 7 9h600" stroke-width="1.300"/></svg>
      <h2 class="mt-[5px] pl-[6px] flex items-center gap-[6px] font-bold text-white"><svg class="w-[8px] h-[8px]" viewBox="0 0 8 8"><path d="M8 0v8H0z" fill="currentColor"/></svg>填充</h2>
      <form class="pl-[20px] pr-[22px]">
        <div class="pt-[6px] pb-[2px]">
          <label class="h-[24px] flex items-center gap-[6px]"><input type="radio" name="fill" checked class="appearance-none size-[13px] rounded-full bg-[#414141] checked:bg-[#f4f4f4] border border-[#383838] checked:border-4"/><span>纯色填充(<u>S</u>)</span></label>
          <label class="h-[25px] flex items-center gap-[6px]"><input type="radio" name="fill" class="appearance-none size-[13px] rounded-full bg-[#414141] border border-[#383838]"/><span>渐变填充(<u>G</u>)</span></label>
          <label class="h-[24px] flex items-center gap-[6px]"><input type="radio" name="fill" class="appearance-none size-[13px] rounded-full bg-[#414141] border border-[#383838]"/><span>图片或纹理填充(<u>P</u>)</span></label>
          <label class="h-[25px] flex items-center gap-[6px]"><input type="radio" name="fill" class="appearance-none size-[13px] rounded-full bg-[#414141] border border-[#383838]"/><span>图案填充(<u>A</u>)</span></label>
          <label class="h-[24px] flex items-center gap-[6px]"><input type="checkbox" class="appearance-none size-[13px] bg-[#414141] border border-[#383838]"/><span>隐藏背景图形(<u>H</u>)</span></label>
        </div>
        <div class="border-t border-[#8c8c8c] pt-[5px] pl-[6px]">
          <div class="flex items-center justify-between h-[23px]">
            <label for="color">颜色(<u>C</u>)</label>
            <button id="color" type="button" class="w-[39px] h-[23px] flex items-center justify-center gap-[6px] bg-[#d2d2d4] border border-[#aaa] text-[#333]">
              <svg class="w-[16px] h-[17px]" viewBox="0 0 16 17"><path d="M3 7l5-5 5 5-5 4.500z" fill="#fff" stroke="#555"/><path d="M6.500 5V1.500c0-1 2-1 2 0V4" fill="none" stroke="#555"/><path d="M12 4c3 1 3 4 2 7-1-2 0-3-2-4z" fill="#2b5f9e"/><path d="M0 13h16v4H0z" fill="#43556b"/></svg>
              <svg class="w-[8px] h-[5px]"><use href="#caret"/></svg>
            </button>
          </div>
          <div class="flex items-center h-[24px] mt-[4px]">
            <label for="alpha">透明度(<u>T</u>)</label>
            <input id="alpha" type="range" value="0" class="ml-[8px] w-0 flex-1 h-[12px] appearance-none bg-[linear-gradient(#e6e6e6,#e6e6e6)] bg-[length:100%_1px] bg-center bg-no-repeat [&::-webkit-slider-thumb]:appearance-none [&::-webkit-slider-thumb]:w-[4px] [&::-webkit-slider-thumb]:h-[11px] [&::-webkit-slider-thumb]:bg-white"/>
            <div class="ml-[5px] w-[100px] h-[24px] flex bg-[#d2d2d4] border border-[#bbb] text-[#333]">
              <input aria-label="透明度" value="0%" class="flex-1 w-0 pl-1 outline-none"/>
              <span class="w-[16px] flex flex-col items-center justify-center gap-[6px]">
                <button type="button" aria-label="增加" class="flex"><svg class="w-[8px] h-[5px]"><use href="#caret-up"/></svg></button>
                <button type="button" aria-label="减少" class="flex"><svg class="w-[8px] h-[5px]"><use href="#caret"/></svg></button>
              </span>
            </div>
          </div>
        </div>
      </form>
      <div class="mt-auto mb-[12px] flex gap-[10px] text-[#262626]">
        <button class="h-[24px] w-[75px] bg-[#d4d4d6] border border-[#bbb]">全部应用(<u>L</u>)</button>
        <button class="h-[24px] w-[75px] bg-[#d4d4d6] border border-[#bbb]">重置背景(<u>B</u>)</button>
      </div>
    </aside>
  </main>

  <script>
    // numbers run from n down to 0 and back up to n, with a tick at each half step
    function fillRuler(id, n, vertical) {
      const el = document.getElementById(id);
      for (let i = -n; i <= n; i++) {
        const cell = document.createElement("div");
        cell.className = vertical
          ? "relative flex-1 min-h-0 flex items-center justify-center"
          : "relative flex-1 min-w-0 flex items-center justify-center leading-[13px]";
        const num = document.createElement("span");
        if (vertical) num.className = "-rotate-90 leading-none";
        num.textContent = Math.abs(i);
        cell.appendChild(num);
        if (i < n) {
          const tick = document.createElement("span");
          tick.className = vertical
            ? "absolute -bottom-px left-[4px] w-[5px] h-px bg-[#aaa]"
            : "absolute -right-px top-[4px] w-px h-[6px] bg-[#aaa]";
          cell.appendChild(tick);
        }
        el.appendChild(cell);
      }
    }
    fillRuler("hruler", 7, false);
    fillRuler("vruler", 12, true);
  </script>
</body>
</html>
